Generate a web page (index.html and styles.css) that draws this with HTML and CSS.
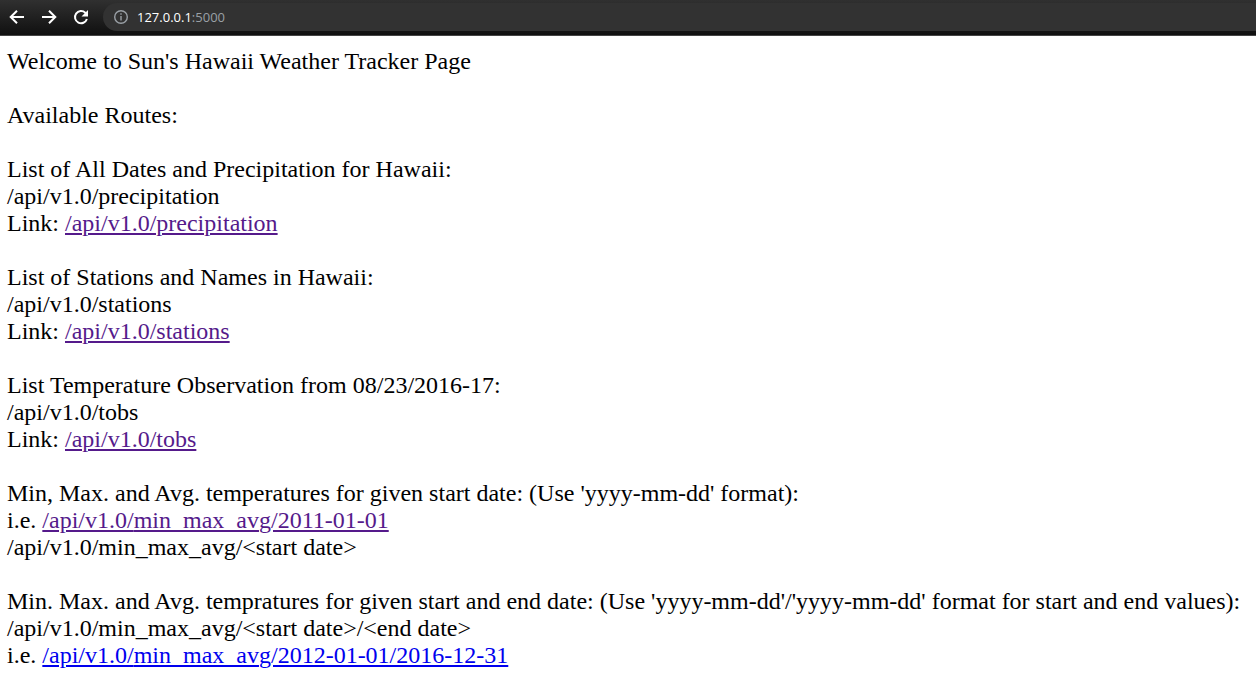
FILE: index.html
```
<!DOCTYPE html>
<html lang="en">
<head>
<meta charset="utf-8">
<title>Hawaii Weather Tracker</title>
<link rel="stylesheet" href="styles.css">
</head>
<body>
<header class="toolbar">
<svg class="icon" viewBox="0 0 16 16"><path d="M15 8H2.500M8 1.700L1.700 8 8 14.300"/></svg>
<svg class="icon" viewBox="0 0 16 16"><path d="M1 8h12.500M8 1.700L14.300 8 8 14.300"/></svg>
<svg class="icon" viewBox="0 0 16 16"><path d="M13.900 10A6.100 6.100 0 1 1 12.300 3.700L13 4.400"/><path class="solid" d="M15 1v6.500H8.500z"/></svg>
<div class="address">
<svg class="info" viewBox="0 0 14 14"><circle cx="7" cy="7" r="6.300"/><path d="M7 6v4.500M7 3.300v1.500"/></svg>
<span class="url">127.0.0.1<span class="port">:5000</span></span>
</div>
</header>
<main class="page">
<p><span>Welcome to Sun's Hawaii Weather Tracker Page</span></p>
<p><span>Available Routes:</span></p>
<p><span>List of All Dates and Precipitation for Hawaii:</span><br><span>/api/v1.0/precipitation</span><br>Link: <a class="visited" href="#">/api/v1.0/precipitation</a></p>
<p><span>List of Stations and Names in Hawaii:</span><br><span>/api/v1.0/stations</span><br>Link: <a class="visited" href="#">/api/v1.0/stations</a></p>
<p><span>List Temperature Observation from 08/23/2016-17:</span><br><span>/api/v1.0/tobs</span><br>Link: <a class="visited" href="#">/api/v1.0/tobs</a></p>
<p><span>Min, Max. and Avg. temperatures for given start date: (Use 'yyyy-mm-dd' format):</span><br>i.e. <a class="visited" href="#">/api/v1.0/<span class="solid-line">min_max_av</span>g/2011-01-01</a><br><span>/api/v1.0/min_max_avg/&lt;start date&gt;</span></p>
<p><span>Min. Max. and Avg. tempratures for given start and end date: (Use 'yyyy-mm-dd'/'yyyy-mm-dd' format for start and end values):</span><br><span>/api/v1.0/min_max_avg/&lt;start date&gt;/&lt;end date&gt;</span><br>i.e. <a class="link" href="#">/api/v1.0/<span class="solid-line">min_max_av</span>g/2012-01-01/2016-12-31</a></p>
</main>
</body>
</html>
```
FILE: styles.css
```
body { margin: 0; background: #fff; overflow: hidden; }
.toolbar { box-sizing: border-box; height: 36px; padding: 0 0 1px 9px; display: flex; align-items: center; gap: 16px; background: linear-gradient(#303030, #101010); border-bottom: 1px solid #444; }
.icon { width: 16px; height: 16px; fill: none; stroke: #fff; stroke-width: 2; flex: none; }
.icon .solid { fill: #fff; stroke: none; }
.address { flex: 1; height: 28px; margin-left: -2px; padding-left: 11px; border-radius: 14px 0 0 14px; background: #323232; display: flex; align-items: center; gap: 9px; }
.info { width: 14px; height: 14px; fill: none; stroke: #9aa0a6; stroke-width: 1.400; }
.url { font: 13px "Open Sans", sans-serif; color: #fff; }
.port { color: #9aa0a6; }
.page { padding: 12px 0 0 7px; font: 24px/27px "Liberation Serif", "Times New Roman", serif; color: #000; white-space: nowrap; }
.page p { margin: 0 0 27px; }
.visited { color: #551a8b; }
.link { color: #0000ee; }
.solid-line { text-decoration-skip-ink: none; }
```
